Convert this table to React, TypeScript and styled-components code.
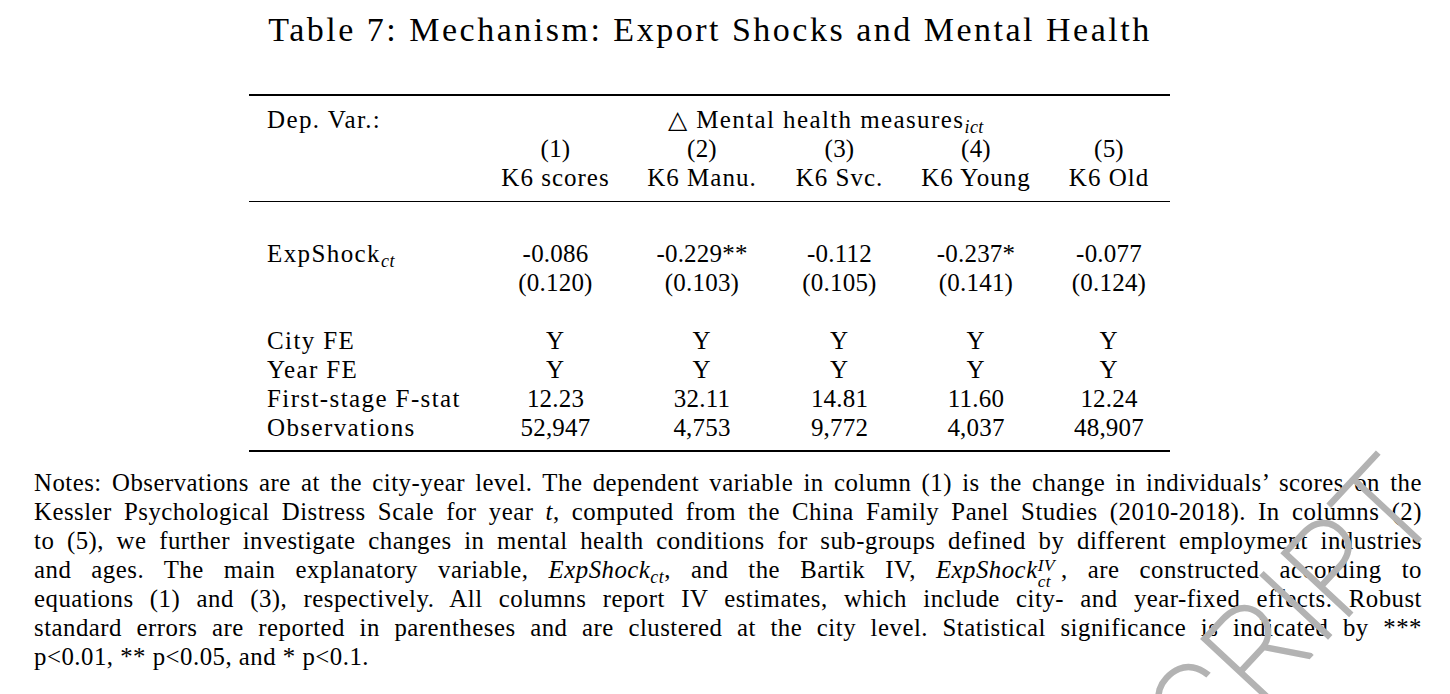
import React from "react";
import styled, { createGlobalStyle } from "styled-components";

const GlobalStyle = createGlobalStyle`
  html, body { margin: 0; padding: 0; background: #ffffff; }
  body { font-family: "Liberation Serif", "Times New Roman", serif; color: #000; }
`;

const Page = styled.div`
  position: relative;
  width: 1450px;
  height: 694px;
  overflow: hidden;
  box-sizing: border-box;
  padding: 0 28px 0 34px;
  background: #fff;
`;

const Title = styled.h1`
  margin: 10px 36px 0 0;
  font-weight: 400;
  font-size: 34px;
  line-height: 40px;
  text-align: center;
  letter-spacing: 2.5px;
`;

const TableBox = styled.div`
  margin: 44px 0 0 215px;
  width: 921px;
  border-top: 2.5px solid #000;
  border-bottom: 2px solid #000;
  font-size: 25px;
`;

const Head = styled.div`
  padding: 9px 0 8.5px;
  border-bottom: 1.4px solid #000;
`;

const Body = styled.div`
  padding: 37px 0 8.5px;
`;

const Row = styled.div`
  display: grid;
  grid-template-columns: 233px 147px 146px 129px 144px 122px;
  height: 29px;
  line-height: 29px;
  white-space: nowrap;
`;

const Spacer = styled.div<{ $h: number }>`
  height: ${(p) => p.$h}px;
`;

const Label = styled.div`
  padding-left: 18px;
  letter-spacing: 1.4px;
`;

const Cell = styled.div<{ $text?: boolean }>`
  text-align: center;
  letter-spacing: ${(p) => (p.$text ? "1px" : "0.2px")};
`;

const SpanCell = styled.div`
  grid-column: 2 / -1;
  text-align: center;
  letter-spacing: 1.4px;
`;

const Sub = styled.span`
  font-style: italic;
  font-size: 0.72em;
  vertical-align: -0.28em;
  line-height: 0;
  letter-spacing: 0.5px;
`;

const Notes = styled.div`
  margin-top: 16px;
  font-size: 24.8px;
  line-height: 29px;
  letter-spacing: 0.5px;
`;

const NoteLine = styled.div<{ $last?: boolean }>`
  height: 29px;
  white-space: nowrap;
  text-align: justify;
  text-align-last: ${(p) => (p.$last ? "left" : "justify")};
`;

const Math = styled.span`
  font-style: italic;
`;

const SupSub = styled.span`
  display: inline-flex;
  flex-direction: column;
  font-style: italic;
  font-size: 0.7em;
  line-height: 0.95;
  vertical-align: 0.42em;
  margin: -8px 6px -8px 0;
`;

const WatermarkSvg = styled.svg`
  position: absolute;
  left: 0;
  top: 0;
  pointer-events: none;
`;

const cols = [
  { head: "(1)", name: "K6 scores", coef: "-0.086", se: "(0.120)", f: "12.23", n: "52,947" },
  { head: "(2)", name: "K6 Manu.", coef: "-0.229**", se: "(0.103)", f: "32.11", n: "4,753" },
  { head: "(3)", name: "K6 Svc.", coef: "-0.112", se: "(0.105)", f: "14.81", n: "9,772" },
  { head: "(4)", name: "K6 Young", coef: "-0.237*", se: "(0.141)", f: "11.60", n: "4,037" },
  { head: "(5)", name: "K6 Old", coef: "-0.077", se: "(0.124)", f: "12.24", n: "48,907" },
];

export default function App() {
  return (
    <>
      <GlobalStyle />
      <Page>
        <Title>Table 7: Mechanism: Export Shocks and Mental Health</Title>
        <TableBox>
          <Head>
            <Row>
              <Label>Dep. Var.:</Label>
              <SpanCell>
                △ Mental health measures<Sub>ict</Sub>
              </SpanCell>
            </Row>
            <Row>
              <Label />
              {cols.map((c) => (
                <Cell key={c.head}>{c.head}</Cell>
              ))}
            </Row>
            <Row>
              <Label />
              {cols.map((c) => (
                <Cell key={c.name} $text>
                  {c.name}
                </Cell>
              ))}
            </Row>
          </Head>
          <Body>
            <Row>
              <Label>
                ExpShock<Sub>ct</Sub>
              </Label>
              {cols.map((c) => (
                <Cell key={c.coef}>{c.coef}</Cell>
              ))}
            </Row>
            <Row>
              <Label />
              {cols.map((c) => (
                <Cell key={c.se}>{c.se}</Cell>
              ))}
            </Row>
            <Spacer $h={29} />
            <Row>
              <Label>City FE</Label>
              {cols.map((c) => (
                <Cell key={c.head} $text>Y</Cell>
              ))}
            </Row>
            <Row>
              <Label>Year FE</Label>
              {cols.map((c) => (
                <Cell key={c.head} $text>Y</Cell>
              ))}
            </Row>
            <Row>
              <Label>First-stage F-stat</Label>
              {cols.map((c) => (
                <Cell key={c.f}>{c.f}</Cell>
              ))}
            </Row>
            <Row>
              <Label>Observations</Label>
              {cols.map((c) => (
                <Cell key={c.n}>{c.n}</Cell>
              ))}
            </Row>
          </Body>
        </TableBox>
        <Notes>
          <NoteLine>
            Notes: Observations are at the city-year level. The dependent variable in column (1) is the change in individuals’ scores on the
          </NoteLine>
          <NoteLine>
            Kessler Psychological Distress Scale for year <Math>t</Math>, computed from the China Family Panel Studies (2010-2018). In columns (2)
          </NoteLine>
          <NoteLine>
            to (5), we further investigate changes in mental health conditions for sub-groups defined by different employment industries
          </NoteLine>
          <NoteLine>
            and ages. The main explanatory variable, <Math>ExpShock</Math>
            <Sub>ct</Sub>, and the Bartik IV, <Math>ExpShock</Math>
            <SupSub>
              <span>IV</span>
              <span>ct</span>
            </SupSub>
            , are constructed according to
          </NoteLine>
          <NoteLine>
            equations (1) and (3), respectively. All columns report IV estimates, which include city- and year-fixed effects. Robust
          </NoteLine>
          <NoteLine>
            standard errors are reported in parentheses and are clustered at the city level. Statistical significance is indicated by ***
          </NoteLine>
          <NoteLine $last>p&lt;0.01, ** p&lt;0.05, and * p&lt;0.1.</NoteLine>
        </Notes>
        <WatermarkSvg width={1450} height={694} viewBox="0 0 1450 694">
          <text
            x={1445}
            y={512}
            transform="rotate(-47 1445 512)"
            textAnchor="end"
            fontFamily="Roboto, sans-serif"
            fontWeight={100}
            fontSize={128}
            fill="#b3b3b3"
            stroke="#b3b3b3"
            strokeWidth={3}
          >
            ACCEPTED MANUSCRIPT
          </text>
        </WatermarkSvg>
      </Page>
    </>
  );
}
